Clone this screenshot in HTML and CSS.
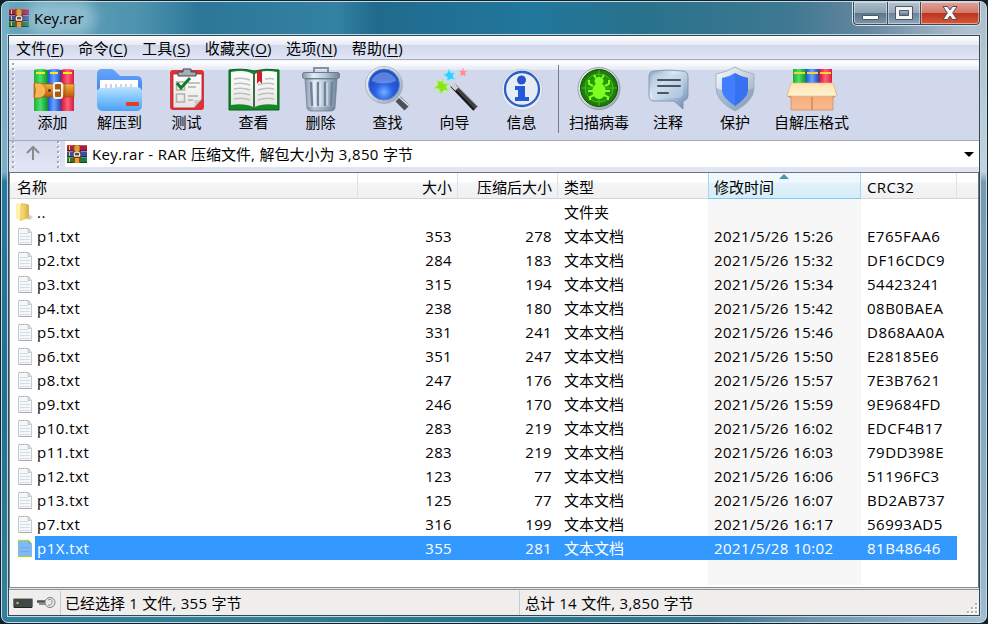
FILE: index.html
```html
<!DOCTYPE html>
<html lang="zh-CN">
<head>
<meta charset="utf-8">
<title>Key.rar</title>
<link rel="stylesheet" href="styles.css">
</head>
<body>
<svg class="defs" width="0" height="0" aria-hidden="true">
  <defs>
    <linearGradient id="green"><stop offset="0" stop-color="#1fae35"/><stop offset=".45" stop-color="#4be06a"/><stop offset="1" stop-color="#0c8f2c"/></linearGradient>
    <linearGradient id="blue"><stop offset="0" stop-color="#1d55cf"/><stop offset=".45" stop-color="#6aa4ff"/><stop offset="1" stop-color="#2049c0"/></linearGradient>
    <linearGradient id="red"><stop offset="0" stop-color="#cf1030"/><stop offset=".5" stop-color="#ff6078"/><stop offset="1" stop-color="#d81c3c"/></linearGradient>
    <linearGradient id="belt" x2="0" y2="1"><stop offset="0" stop-color="#f5b048"/><stop offset=".5" stop-color="#dd8520"/><stop offset="1" stop-color="#b85a0c"/></linearGradient>
    <linearGradient id="folderBack" x2="0" y2="1"><stop offset="0" stop-color="#68a6fb"/><stop offset="1" stop-color="#2f72e8"/></linearGradient>
    <linearGradient id="folderFront" x2="0" y2="1"><stop offset="0" stop-color="#b9e2ff"/><stop offset=".5" stop-color="#7dc2fc"/><stop offset="1" stop-color="#4ba0f5"/></linearGradient>
    <linearGradient id="steel"><stop offset="0" stop-color="#8496aa"/><stop offset=".3" stop-color="#e4edf4"/><stop offset=".6" stop-color="#b9cada"/><stop offset="1" stop-color="#70849a"/></linearGradient>
    <linearGradient id="page" x2="0" y2="1"><stop offset="0" stop-color="#fff"/><stop offset="1" stop-color="#e4e4e2"/></linearGradient>
    <radialGradient id="lens" cy=".75"><stop offset="0" stop-color="#6fb2ff"/><stop offset=".55" stop-color="#2c62e6"/><stop offset="1" stop-color="#2451c4"/></radialGradient>
    <linearGradient id="silver" x2="1" y2="1"><stop offset="0" stop-color="#f8fbfd"/><stop offset=".5" stop-color="#c9d3dc"/><stop offset="1" stop-color="#8e9ba8"/></linearGradient>
    <radialGradient id="radar"><stop offset="0" stop-color="#2ba80f"/><stop offset=".7" stop-color="#219009"/><stop offset="1" stop-color="#1c7109"/></radialGradient>
    <linearGradient id="bubble" x2="1" y2="1"><stop offset="0" stop-color="#8aa3c4"/><stop offset=".35" stop-color="#dce9f6"/><stop offset=".7" stop-color="#a0b8d3"/><stop offset="1" stop-color="#6483aa"/></linearGradient>
    <linearGradient id="box" x2="0" y2="1"><stop offset="0" stop-color="#e9a672"/><stop offset="1" stop-color="#fcb98c"/></linearGradient>
    <linearGradient id="flap" x2="0" y2="1"><stop offset="0" stop-color="#ffe3b0"/><stop offset="1" stop-color="#fff2d0"/></linearGradient>
    <linearGradient id="gold"><stop offset="0" stop-color="#f9e68b"/><stop offset="1" stop-color="#d8ae3c"/></linearGradient>

    <symbol id="rar" viewBox="0 0 20 20">
      <path fill="#a21f48" d="M0 1h20v6H0z"/><path fill="#d34a6c" d="M0 1h20v1H0z"/><path fill="#651126" d="M0 6h20v1H0z"/>
      <path fill="#3f4ca8" d="M0 7h20v6H0z"/><path fill="#7887d8" d="M0 7h20v1H0z"/><path fill="#202760" d="M0 12h20v1H0z"/>
      <path fill="#1e7a45" d="M0 13h20v6H0z"/><path fill="#43a268" d="M0 13h20v1H0z"/><path fill="#0d4023" d="M0 18h20v1H0z"/>
      <path fill="#f2c438" d="M2 2h1v4H2zM2 8h1v4H2zM2 14h1v4H2z"/>
      <path fill="#8a4a18" d="M6 1h7v18H6z"/><path fill="#e99a31" d="M7.500 2q2.500-2 5 0v5h-5zM8 14h4v5H8z"/>
      <path fill="#634024" d="M6 7h8v7H6z"/><path fill="none" stroke="#e8e5dc" stroke-width="1.300" d="M7.500 12q-1-4 2.500-4t2.500 4z"/>
    </symbol>
    <symbol id="txt" viewBox="0 0 16 18">
      <path fill="#f5f7f8" stroke="#c5cbce" d="M1.500 1.500h10l3 4v12h-13z"/>
      <path fill="#dbe3e8" stroke="#b4bcc0" stroke-width=".7" d="M11 1.500v4h3.500z"/><path stroke="#a6b3ba" stroke-dasharray="1 1" d="M2 1.500h9"/>
      <path stroke="#cfdfe7" d="M3 6.500h8M3 9.500h10M3 12.500h10M3 15.500h10"/><path stroke="#a9a9a9" d="M2 17.500h12.500"/>
    </symbol>
    <symbol id="txt-selected" viewBox="0 0 16 18">
      <path fill="#80baf4" d="M1 1h11l3 4v13H1z"/><path fill="#6ca9e8" d="M11 1v4h4z"/>
      <path stroke="#b5dd13" d="M1 1.500h11" stroke-width="1.500" stroke-dasharray="3 1"/><path stroke="#a9d619" d="M1 17.500h14M12 2l2.500 3.500"/>
      <path stroke="#6eabed" d="M3 8.500h10M3 12.500h10"/>
    </symbol>
    <symbol id="folder" viewBox="0 0 18 20">
      <path fill="#bdbdbd" opacity=".7" d="m12 12 5 3-3 3-3-1z"/>
      <path fill="#e8c961" d="m5 1 7 1v14l-7 2z"/><path fill="#fff2aa" d="m0 1 5 1v17l-4-2-1-1z"/>
      <path fill="url(#gold)" d="m5 4 5-2 3 1v13l-9 3z"/><path stroke="#dcbb5c" stroke-width=".7" d="M5 3v16"/>
    </symbol>
  </defs>
</svg>

<div class="window">
  <header class="titlebar">
    <svg class="app-icon"><use href="#rar"/></svg>
    <h1 class="title">Key.rar</h1>
    <div class="controls">
      <span class="control minimize"><svg viewBox="0 0 18 8"><rect x=".5" y="2.500" width="16" height="4" rx=".5" fill="#fff" stroke="#4c5866"/></svg></span>
      <span class="control maximize"><svg viewBox="0 0 18 14"><path fill="#f4f4f4" stroke="#4c5866" fill-rule="evenodd" d="M.5.500h17v13H.5zM4.500 4.500v5h9v-5z"/></svg></span>
      <span class="control close"><svg viewBox="0 0 16 14"><path fill="#f7f7f7" stroke="#594a55" stroke-linejoin="round" d="M1 .5h4.500L8 4l2.500-3.500H15L10.700 7l4.300 6.500h-4.500L8 10l-2.500 3.500H1L5.300 7z"/></svg></span>
    </div>
  </header>

  <main class="client">
    <nav class="menu">
      <span class="menu-item">文件(<u>F</u>)</span><span class="menu-item">命令(<u>C</u>)</span><span class="menu-item">工具(<u>S</u>)</span><span class="menu-item">收藏夹(<u>O</u>)</span><span class="menu-item">选项(<u>N</u>)</span><span class="menu-item">帮助(<u>H</u>)</span>
    </nav>

    <section class="toolbar">
      <i class="grip"></i>
      <div class="tool"><svg viewBox="0 0 48 48">
        <path fill="url(#green)" d="M5 4q6-2 14 0v41H5z"/><path fill="url(#blue)" d="M19 4q6-2 13 0v41H19z"/><path fill="url(#red)" d="M32 4q6-2 13 0v41H32z"/>
        <path fill="#f8e72b" d="M7 6h9v2H7zM21 6h8v2h-8zM34 6h9v2h-9z"/>
        <path fill="url(#belt)" stroke="#9a4a07" stroke-width=".6" d="M5 18h40v13H5z"/><path fill="#f6b654" stroke="#a95b11" stroke-width=".7" d="M5 17h6q6 2 6 7.500T11 32H5q3-7.500 0-15z"/>
        <circle cx="20.500" cy="24.500" r="1.500" fill="#543211"/><rect x="25" y="17" width="8" height="15" rx="2" fill="#a85c12" stroke="#f1eee8" stroke-width="2"/><path stroke="#fff" stroke-width="2" d="M24 24.500h7"/><path stroke="#8b5010" stroke-width=".8" d="M36 18v13"/>
      </svg><span>添加</span></div>
      <div class="tool"><svg viewBox="0 0 48 48">
        <path fill="url(#folderBack)" d="M1 8q0-5 5-5h9q3 0 5 3l4 4h17q5 0 5 6v22H1z"/>
        <path fill="#fff" d="M4 14h38v14H4z"/><path stroke="#c2c5cb" stroke-width="1.500" d="M10 18v9M15 18v9M20 18v9M25 18v9M30 18v9M35 18v9"/>
        <path fill="url(#folderFront)" d="M1 25q1-3 5-3h9q3 0 5-1h21q4 0 5 4v14q0 6-6 6H8q-7 0-7-6z"/><rect x="30" y="36" width="13" height="4" rx="1" fill="#e43c1c"/>
      </svg><span>解压到</span></div>
      <div class="tool"><svg viewBox="0 0 48 48">
        <rect x="7" y="4" width="34" height="40" rx="3" fill="#dc3338"/><path fill="url(#page)" stroke="#af2228" stroke-width=".8" d="M10 8h29v25l-8 9H10z"/><path fill="#c7c9c9" d="m39 33-8 9q2-5 0-8 5 1 8-1z"/>
        <path fill="#a4adb4" stroke="#434b52" d="M15 6h5V3h8v3h5v4H15z"/>
        <path fill="none" stroke="#b0b0ad" stroke-width="1.500" d="M13.500 16h8v8h-8zM13.500 28h8v8h-8zM25 17h12M25 21h8M25 30h10M25 34h5"/><path fill="none" stroke="#127d29" stroke-width="3" d="m14 17 4 5 9-10"/>
      </svg><span>测试</span></div>
      <div class="tool"><svg viewBox="0 0 48 48">
        <path fill="#15862a" stroke="#096019" d="M-1 4q14-2 25 1 12-3 25-1v40H-1z"/>
        <path fill="url(#page)" d="M1 6q14-3 22 2v33q-8-4-22-2zM47 6q-14-3-22 2v33q8-4 22-2z"/><path stroke="#575b58" stroke-width="1.300" d="M24 7v35"/>
        <path fill="none" stroke="#bfc1be" stroke-width="1.500" d="M4 13q8-2 16 1M4 18q8-2 16 1M4 23q8-2 16 1M4 28q8-2 16 1M4 33q8-2 16 1M35 13q5-1 9 0M28 19q8-3 16-1M28 24q8-3 16-1M28 29q8-3 16-1M28 34q8-3 16-1"/>
        <path fill="#d31f28" d="M27 5h5v13l-2.500-3-2.500 3z"/>
      </svg><span>查看</span></div>
      <div class="tool"><svg viewBox="0 0 48 48">
        <path fill="none" stroke="#8492a0" stroke-width="2" d="M17 7V2h14v5"/>
        <path fill="url(#steel)" stroke="#708195" stroke-width=".8" d="M8 13h32l-2 29q-1 3-4 3H14q-3 0-4-3z"/><rect x="5.500" y="6.500" width="37" height="6" rx="2" fill="url(#steel)" stroke="#6b7b8b"/>
        <path stroke="#71849a" stroke-width="2.500" stroke-linecap="round" d="m14 17 1 22M21 17v22M28 17v22M35 17l-1 22"/><path stroke="#e9f1f7" d="m16.500 17 1 22M23 17v22M30 17v22"/><path fill="#526276" opacity=".3" d="M10 41h28q-1 4-4 4H14q-3 0-4-4z"/>
      </svg><span>删除</span></div>
      <div class="tool"><svg viewBox="0 0 48 48">
        <path stroke="#cbd3da" stroke-width="5" d="m31 31 6 5"/><path stroke="#4a5159" stroke-width="7" d="m34 33 9 9"/><path stroke="#e2e7eb" stroke-width="1.500" d="m35 31 10 9"/>
        <circle cx="20" cy="19" r="18.500" fill="url(#silver)" stroke="#98a6b5" stroke-width=".7"/><circle cx="20" cy="18.500" r="15.500" fill="url(#lens)" stroke="#5d88d4"/><path fill="#c4dcff" opacity=".35" d="M7.500 15a13 12 0 0 1 25 0q-13 5-25 0z"/>
      </svg><span>查找</span></div>
      <div class="tool"><svg viewBox="0 0 48 48">
        <path stroke="#414141" stroke-width="5" d="m22 19 23 23"/><path stroke="#171717" stroke-width="2" d="m20 20 23 24"/><path stroke="#d2d2d2" stroke-width="5" d="m21 18 5 5"/><path stroke="#999" d="m25 19 21 21"/>
        <path fill="#87e51f" stroke="#b5f26c" d="m11 13 2 5 5-1-3 4 3 4-5-1-3 4-2-5-5-1 4-3-1-5 4 2z"/><path fill="#31cfff" stroke="#95eaff" d="m18 3 2 4 4-1-2 4 2 4-4-1-4 2v-4l-4-2 4-2z"/><path fill="#ff8b91" stroke="#ffb1b5" stroke-width=".6" d="m32 2 1 3h3l-2 2 1 3-3-1-3 1 1-3-2-2h3z"/>
      </svg><span>向导</span></div>
      <div class="tool"><svg viewBox="0 0 48 48">
        <circle cx="24" cy="24" r="20.500" fill="#e4eaf0" stroke="#bfc9d4" stroke-width=".8"/><circle cx="24" cy="23" r="17" fill="#e8edf4" stroke="#2d5dc8" stroke-width="2.300"/>
        <circle cx="23.500" cy="14" r="4.500" fill="#2854c9"/><path fill="#2458dd" d="M17 20h10v11h4v4H17v-4h3v-7h-3z"/>
      </svg><span>信息</span></div>
      <i class="separator"></i>
      <div class="tool virus"><svg viewBox="0 0 48 48">
        <circle cx="24" cy="22.500" r="21" fill="url(#silver)" stroke="#87938e" stroke-width=".8"/><circle cx="24" cy="22" r="18.500" fill="url(#radar)" stroke="#125004"/>
        <g fill="none" stroke="#49bb22"><circle cx="24" cy="22" r="14"/><path d="M24 4v36M6 22h36"/></g>
        <ellipse cx="24" cy="25" rx="6.500" ry="8" fill="#7cff21"/><ellipse cx="24" cy="15" rx="4.500" ry="4" fill="#7cff21"/><path fill="none" stroke="#7cff21" stroke-width="2" d="m18 20-4-2v-4M30 20l4-2v-4M18 25h-5M30 25h5M19 29l-4 2v3M29 29l4 2v3M21 12l-2-3M27 12l2-3"/>
      </svg><span>扫描病毒</span></div>
      <div class="tool comment"><svg viewBox="0 0 48 48">
        <path fill="url(#bubble)" stroke="#768ba6" stroke-width=".8" d="M10 5q14-2 28 0 6 0 6 6v18q0 5-5 6v8l-9-8H10q-5 0-5-6V11q0-6 5-6z"/><rect x="8" y="8" width="31" height="24" rx="5" fill="#c3d5e9" opacity=".55"/>
        <path stroke="#4c5662" stroke-width="2" stroke-linecap="round" d="M14 14h22M14 20h22M14 27h10"/>
      </svg><span>注释</span></div>
      <div class="tool protect"><svg viewBox="0 0 48 48">
        <path fill="url(#silver)" stroke="#a3b4c7" d="M24 1q8 5 19 7v14q0 13-19 23Q5 35 5 22V8q11-2 19-7z"/><path fill="#7d9bbd" opacity=".5" d="M24 45Q5 35 5 22l6 2 13 14 13-14 6-2q0 13-19 23z"/><path fill="#417eff" d="M24 7q6 4 13 5v13q-1 7-13 15-12-8-13-15V12q7-1 13-5z"/><path fill="#2459d0" d="M24 7q6 4 13 5v13q-1 7-13 15z" opacity=".35"/>
      </svg><span>保护</span></div>
      <div class="tool sfx"><svg viewBox="0 0 48 48">
        <path fill="url(#green)" d="M5 3h13v16H5z"/><path fill="url(#blue)" d="M18 3h13v16H18z"/><path fill="url(#red)" d="M31 3h13v16H31z"/><path fill="#f5d52b" d="M6 6h11v2H6zM19 6h11v2H19zM32 6h11v2H32z"/>
        <path fill="url(#box)" stroke="#cf8759" stroke-width=".7" d="M3 18h42v26H3z"/><path fill="#c87e57" d="m3 17-4 13 4 2zM45 17l4 12-4 3z"/><path fill="url(#flap)" stroke="#e6b77c" stroke-width=".7" d="M3 17h42l4 13H-1z"/><path stroke="#c7713f" d="M24 31v13"/>
      </svg><span>自解压格式</span></div>
    </section>

    <section class="location">
      <i class="grip"></i>
      <svg class="up" viewBox="0 0 16 16"><path fill="none" stroke="#8b8b8b" stroke-width="2" d="M8 15V2M2 8l6-6 6 6"/></svg>
      <i class="grip"></i>
      <div class="address"><svg class="address-icon"><use href="#rar"/></svg><span class="address-text"><b>Key.rar - RAR </b>压缩文件<b>, </b>解包大小为<b> 3,850 </b>字节</span><i class="dropdown"></i></div>
    </section>

    <section class="list">
      <div class="row head"><span class="name">名称</span><span class="num">大小</span><span class="num">压缩后大小</span><span>类型</span><span class="sorted">修改时间<i class="sort-arrow"></i></span><span class="latin">CRC32</span></div>
      <div class="body">
        <div class="row"><span class="name"><svg class="folder-icon"><use href="#folder"/></svg><b>..</b></span><span></span><span></span><span>文件夹</span></div>
        <div class="row"><span class="name"><svg><use href="#txt"/></svg><b>p1.txt</b></span><span class="num">353</span><span class="num">278</span><span>文本文档</span><span class="latin">2021/5/26 15:26</span><span class="latin">E765FAA6</span></div>
        <div class="row"><span class="name"><svg><use href="#txt"/></svg><b>p2.txt</b></span><span class="num">284</span><span class="num">183</span><span>文本文档</span><span class="latin">2021/5/26 15:32</span><span class="latin">DF16CDC9</span></div>
        <div class="row"><span class="name"><svg><use href="#txt"/></svg><b>p3.txt</b></span><span class="num">315</span><span class="num">194</span><span>文本文档</span><span class="latin">2021/5/26 15:34</span><span class="latin">54423241</span></div>
        <div class="row"><span class="name"><svg><use href="#txt"/></svg><b>p4.txt</b></span><span class="num">238</span><span class="num">180</span><span>文本文档</span><span class="latin">2021/5/26 15:42</span><span class="latin">08B0BAEA</span></div>
        <div class="row"><span class="name"><svg><use href="#txt"/></svg><b>p5.txt</b></span><span class="num">331</span><span class="num">241</span><span>文本文档</span><span class="latin">2021/5/26 15:46</span><span class="latin">D868AA0A</span></div>
        <div class="row"><span class="name"><svg><use href="#txt"/></svg><b>p6.txt</b></span><span class="num">351</span><span class="num">247</span><span>文本文档</span><span class="latin">2021/5/26 15:50</span><span class="latin">E28185E6</span></div>
        <div class="row"><span class="name"><svg><use href="#txt"/></svg><b>p8.txt</b></span><span class="num">247</span><span class="num">176</span><span>文本文档</span><span class="latin">2021/5/26 15:57</span><span class="latin">7E3B7621</span></div>
        <div class="row"><span class="name"><svg><use href="#txt"/></svg><b>p9.txt</b></span><span class="num">246</span><span class="num">170</span><span>文本文档</span><span class="latin">2021/5/26 15:59</span><span class="latin">9E9684FD</span></div>
        <div class="row"><span class="name"><svg><use href="#txt"/></svg><b>p10.txt</b></span><span class="num">283</span><span class="num">219</span><span>文本文档</span><span class="latin">2021/5/26 16:02</span><span class="latin">EDCF4B17</span></div>
        <div class="row"><span class="name"><svg><use href="#txt"/></svg><b>p11.txt</b></span><span class="num">283</span><span class="num">219</span><span>文本文档</span><span class="latin">2021/5/26 16:03</span><span class="latin">79DD398E</span></div>
        <div class="row"><span class="name"><svg><use href="#txt"/></svg><b>p12.txt</b></span><span class="num">123</span><span class="num">77</span><span>文本文档</span><span class="latin">2021/5/26 16:06</span><span class="latin">51196FC3</span></div>
        <div class="row"><span class="name"><svg><use href="#txt"/></svg><b>p13.txt</b></span><span class="num">125</span><span class="num">77</span><span>文本文档</span><span class="latin">2021/5/26 16:07</span><span class="latin">BD2AB737</span></div>
        <div class="row"><span class="name"><svg><use href="#txt"/></svg><b>p7.txt</b></span><span class="num">316</span><span class="num">199</span><span>文本文档</span><span class="latin">2021/5/26 16:17</span><span class="latin">56993AD5</span></div>
        <div class="row selected"><span class="name"><svg><use href="#txt-selected"/></svg><b>p1X.txt</b></span><span class="num">355</span><span class="num">281</span><span>文本文档</span><span class="latin">2021/5/28 10:02</span><span class="latin">81B48646</span></div>
      </div>
    </section>

    <footer class="status">
      <div class="status-icons">
        <svg width="20" height="12" viewBox="0 0 20 12"><rect x=".5" y="1.500" width="19" height="9" rx="1" fill="#434746" stroke="#777c7b"/><path stroke="#a0a4a3" d="M1 1.500h18"/><path stroke="#222" d="M1 10.500h18"/><circle cx="4.500" cy="6" r="1.200" fill="#9ed36b"/></svg>
        <svg width="21" height="13" viewBox="0 0 21 13"><path stroke="#4d5154" stroke-width="2.500" d="M1 5.500h10"/><path stroke="#8b8e91" stroke-width="2" d="M3 8h7"/><circle cx="14" cy="6.500" r="5" fill="#e6e8ea" stroke="#7c8083"/><path fill="none" stroke="#8c9194" d="M12 4q4-2 4 2t-4 3"/></svg>
      </div>
      <div class="status-left">已经选择<b> 1 </b>文件<b>, 355 </b>字节</div>
      <div class="status-right">总计<b> 14 </b>文件<b>, 3,850 </b>字节</div>
      <svg class="resize" width="12" height="12" viewBox="0 0 12 12"><path fill="#fff" d="M9 1h3v3H9zM5 5h3v3H5zM9 5h3v3H9zM1 9h3v3H1zM5 9h3v3H5zM9 9h3v3H9z"/><path fill="#b4afaf" d="M9 1h2v2H9zM5 5h2v2H5zM9 5h2v2H9zM1 9h2v2H1zM5 9h2v2H5zM9 9h2v2H9z"/></svg>
    </footer>
  </main>
</div>
</body>
</html>
```
FILE: styles.css
```css
* { box-sizing: border-box; }
body {
  margin: 0;
  width: 988px;
  height: 624px;
  overflow: hidden;
  background: #10212b;
  color: #000;
  font: 15px/20px "Open Sans", "Noto Sans CJK SC", sans-serif;
}
b { font-weight: 400; letter-spacing: .35px; white-space: pre; }
svg { display: block; overflow: visible; flex: none; }
.defs { position: absolute; }
.window {
  width: 986px;
  height: 622px;
  margin-left: 1px;
  margin-top: 1px;
  border: 1px solid #c3dbe5;
  border-radius: 7px;
  padding: 0 6px;
  display: flex;
  flex-direction: column;
  background:
    linear-gradient(90deg, #2f7f9e, #367d92 25%, #25748c 50%, #38768e 72%, #6e93ac 82%, #a3bfd2) 0 100% / 100% 7px no-repeat,
    linear-gradient(180deg, #75aec3, #7bb0c8 170px, #2679a0 180px, #216f91 400px, #34829a) 0 0 / 7px 100% no-repeat,
    linear-gradient(180deg, #adbdca, #c2d2df 170px, #7899b2 180px, #86a7c0 400px, #9ebbd0) 100% 0 / 8px 100% no-repeat,
    linear-gradient(90deg, #69a7bc, #4d93ae 14%, #2c7798 20%, #3381a3 34%, #206b8d 38%, #21779c 54%, #29728c 65%, #3e7891 80%, #6687a0 88%, #b1c0ce 98%);
}
.titlebar { height: 33px; flex: none; display: flex; padding-left: 1px; }
.app-icon { width: 20px; height: 20px; margin-top: 6px; }
.title {
  margin: 6px 0 0 5px;
  font-size: 15px;
  font-weight: 400;
  height: 20px;
  width: 54px;
  border-radius: 9px;
  background: rgba(190, 218, 229, .5);
  box-shadow: 0 0 12px 8px rgba(190, 218, 229, .5);
}
.controls {
  margin-left: auto;
  margin-right: -1px;
  width: 129px;
  height: 24px;
  display: flex;
  border: 1px solid #d5e0e8;
  border-top: 0;
  border-radius: 0 0 5px 5px;
  overflow: hidden;
}
.control {
  display: grid;
  place-items: center;
  border: 1px solid #3b4a58;
  border-top: 0;
  box-shadow: inset 0 0 0 1px rgba(255, 255, 255, .45);
  background: linear-gradient(#a9bac7, #8ca3b4 48%, #59738a 50%, #7d96a9);
}
.minimize { width: 35px; border-radius: 0 0 0 4px; }
.maximize { width: 33px; border-left: 0; background: linear-gradient(#b6c1ce, #98a8b9 48%, #69819a 50%, #91a6bb); }
.close { flex: 1; border-left: 0; border-radius: 0 0 4px; background: linear-gradient(#e0a298, #d27a6a 48%, #bb321a 50%, #d8593a); }
.minimize svg { width: 18px; height: 8px; margin-top: 8px; }
.maximize svg { width: 18px; height: 14px; }
.close svg { width: 16px; height: 14px; }
.client {
  width: 972px;
  height: 581px;
  flex: none;
  border: 1px solid #314957;
  outline: 1px solid #c2d8e1;
  display: flex;
  flex-direction: column;
  background: #e2e5f4;
}
.menu {
  height: 24px;
  flex: none;
  display: flex;
  align-items: center;
  gap: 14.3px;
  padding-left: 7px;
  border-bottom: 1px solid #a9adbf;
  background: linear-gradient(#fff, #e6eaf5 9px, #d2d8eb 9px, #e1e6f6);
}
.menu-item { white-space: nowrap; letter-spacing: .25px; }
.menu-item u { text-underline-offset: 2px; }
.toolbar {
  height: 81px;
  flex: none;
  display: flex;
  border-bottom: 1px solid #aaa8b2;
  background: linear-gradient(#eff1f8, #fff 2px, #e3e8f3 10px, #d2d8ec 10px);
}
.grip {
  width: 3px;
  margin: 3px 1px 1px 3px;
  flex: none;
  background: radial-gradient(circle at 1px 1px, #a4a7b3 1px, transparent 1.3px) 0 0 / 3px 5px, radial-gradient(circle at 2px 2px, #fff 1px, transparent 1.3px) 0 0 / 3px 5px;
}
.toolbar .grip { margin-right: 4px; }
.tool { width: 67px; display: flex; flex-direction: column; align-items: center; padding-top: 6px; white-space: nowrap; }
.tool svg { width: 48px; height: 48px; }
.tool span { height: 20px; margin-top: -2px; }
.separator { width: 1px; height: 68px; margin: 5px 5px 0 3px; background: #777b88; }
.virus { width: 70px; }
.comment { width: 68px; }
.protect { width: 66px; }
.sfx { width: 87px; }
.location { height: 28px; flex: none; display: flex; background: linear-gradient(#d5daed, #e1e5f5); }
.location .grip { margin-top: 0; }
.up { width: 16px; height: 16px; margin: 4px 13px 0 9px; }
.address { margin-left: 4px; flex: 1; height: 26px; background: #fff; display: flex; align-items: center; padding: 0 5px 0 2px; }
.address-icon { width: 20px; height: 20px; }
.address-text { margin-left: 5px; flex: 1; white-space: pre; }
.dropdown { border: 5px solid transparent; border-top-color: #000; border-bottom: 0; }
.list {
  height: 416px;
  margin-top: 3px;
  flex: none;
  border: 1px solid #6d747b;
  border-left-color: #83888f;
  border-bottom-color: #8b8b8b;
  background: #fff;
}
.row { display: grid; grid-template-columns: 348px 100px 100px 151px 152px 96px; height: 24px; }
.row > span { padding: 2px 0 0 6px; white-space: nowrap; }
.row .num { text-align: right; padding-right: 6px; }
.row:not(.head) .num, .latin { letter-spacing: .35px; }
.row .latin { padding-left: 6px; }
.row .latin:nth-child(5) { padding-left: 5px; letter-spacing: .42px; }
.row:not(.head) .latin:nth-child(6) { letter-spacing: .5px; }
.head { height: 26px; border-bottom: 1px solid #d5d5d5; background: linear-gradient(#fff 9px, #f4f5f6 10px, #eef0f2); }
.head > span { border-right: 1px solid #dfe1e4; padding-top: 4px; }
.head > .num { padding-right: 5px; }
.head > .sorted { position: relative; margin-left: -1px; border-left: 1px solid #9bdcf4; border-right-color: #9bdcf4; border-bottom: 1px solid #7ec9ec; margin-bottom: -1px; padding-left: 5px; background: linear-gradient(#eff9fd 9px, #e1f1f9 10px, #d5edf9); }
.sort-arrow { position: absolute; left: 70px; top: 1px; border: 5px solid transparent; border-bottom-color: #4f94ad; border-top: 0; }
.body { height: 388px; padding-top: 1px; background: linear-gradient(#f7f7f7, #f7f7f7) 698px 0 / 153px 386px no-repeat; }
.row > .name { display: flex; padding-left: 7px; }
.name b { letter-spacing: .5px; }
.name svg { width: 16px; height: 18px; margin: 1px 4px 0 0; }
.name .folder-icon { width: 18px; height: 20px; margin: 0 3px 0 -1px; }
.selected { width: 947px; color: #fff; background: linear-gradient(#3399ff, #3399ff) 25px 0 / 922px 100% no-repeat; }
.status { height: 26px; margin-top: 1px; flex: none; display: flex; align-items: center; background: #f0eded; border-top: 1px solid #969292; }
.status-icons { display: flex; align-items: center; gap: 3px; width: 52px; padding-left: 4px; border-right: 1px solid #cbc8c8; height: 24px; }
.status-left { width: 459px; border-right: 1px solid #cbc8c8; padding: 2px 0 0 4px; height: 24px; white-space: pre; }
.status-right { flex: 1; padding: 2px 0 0 5px; height: 24px; white-space: pre; }
.status b { letter-spacing: .3px; }
.resize { align-self: flex-end; margin: 0 1px 1px 0; }
```
